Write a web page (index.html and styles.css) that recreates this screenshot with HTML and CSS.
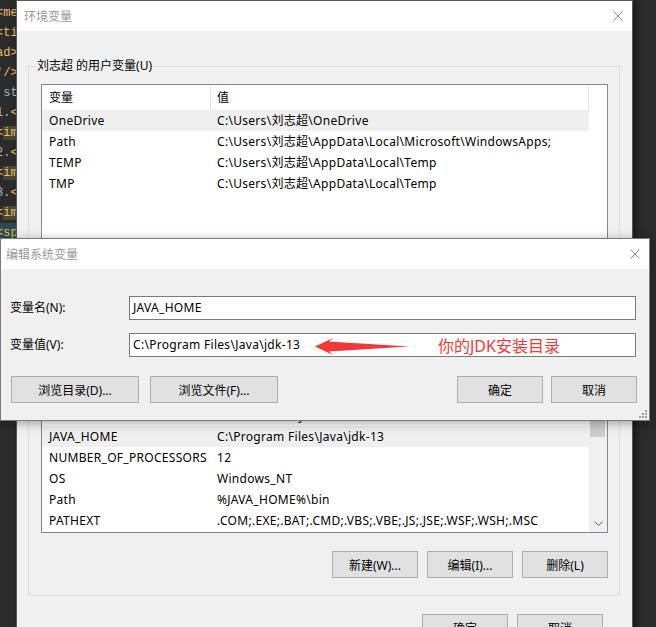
FILE: index.html
```html
<!DOCTYPE html>
<html lang="zh-CN">
<head>
<meta charset="utf-8">
<title>环境变量</title>
<link rel="stylesheet" href="styles.css">
</head>
<body>
<div class="desktop">
  <div class="editor">
    <div class="code"><span class="tag">&lt;me</span></div>
    <div class="code"><span class="tag">&lt;ti</span></div>
    <div class="code"><span class="tag">ad&gt;</span></div>
    <div class="code"><span class="tag">'/&gt;</span></div>
    <div class="code"><span class="txt"> st</span></div>
    <div class="code"><span class="txt">1.</span><span class="tag">&lt;</span></div>
    <div class="code"><span class="tag">&lt;</span><span class="tag hl">im</span></div>
    <div class="code"><span class="txt">2.</span><span class="tag">&lt;</span></div>
    <div class="code"><span class="tag">&lt;</span><span class="tag hl">im</span></div>
    <div class="code"><span class="txt">3.</span><span class="tag">&lt;</span></div>
    <div class="code"><span class="tag">&lt;</span><span class="tag hl">im</span></div>
    <div class="code sel"><span class="tag">&lt;sp</span></div>
  </div>

  <div class="window main">
    <div class="titlebar">
      <span class="title">环境变量</span>
      <svg class="close" viewBox="0 0 10 10"><path d="M0.5 0.5 L9.5 9.5 M9.5 0.5 L0.5 9.5"/></svg>
    </div>
    <div class="win-body">
      <div class="group user">
        <span class="group-label">刘志超 的用户变量(U)</span>
        <div class="listview lv-user">
          <div class="lv-main">
            <div class="lv-head"><div class="c1">变量</div><div class="c2">值</div></div>
            <div class="lv-row sel"><div class="c1">OneDrive</div><div class="c2">C:\Users\刘志超\OneDrive</div></div>
            <div class="lv-row"><div class="c1">Path</div><div class="c2">C:\Users\刘志超\AppData\Local\Microsoft\WindowsApps;</div></div>
            <div class="lv-row"><div class="c1">TEMP</div><div class="c2">C:\Users\刘志超\AppData\Local\Temp</div></div>
            <div class="lv-row"><div class="c1">TMP</div><div class="c2">C:\Users\刘志超\AppData\Local\Temp</div></div>
          </div>
        </div>
        <div class="btn-row">
          <button class="btn w86">新建(N)...</button>
          <button class="btn w86">编辑(E)...</button>
          <button class="btn w86">删除(D)</button>
        </div>
      </div>

      <div class="group system">
        <span class="group-label">系统变量(S)</span>
        <div class="listview lv-sys">
          <div class="lv-main">
            <div class="lv-head"><div class="c1">变量</div><div class="c2">值</div></div>
            <div class="lv-row"><div class="c1">ComSpec</div><div class="c2">C:\WINDOWS\system32\cmd.exe</div></div>
            <div class="lv-row"><div class="c1">CLASSPATH</div><div class="c2">.;%JAVA_HOME%\lib;%JAVA_HOME%\lib\tools.jar</div></div>
            <div class="lv-row"><div class="c1">DriverData</div><div class="c2">C:\Windows\System32\Drivers\DriverData</div></div>
            <div class="lv-row sel"><div class="c1">JAVA_HOME</div><div class="c2">C:\Program Files\Java\jdk-13</div></div>
            <div class="lv-row"><div class="c1">NUMBER_OF_PROCESSORS</div><div class="c2">12</div></div>
            <div class="lv-row"><div class="c1">OS</div><div class="c2">Windows_NT</div></div>
            <div class="lv-row"><div class="c1">Path</div><div class="c2">%JAVA_HOME%\bin</div></div>
            <div class="lv-row"><div class="c1">PATHEXT</div><div class="c2">.COM;.EXE;.BAT;.CMD;.VBS;.VBE;.JS;.JSE;.WSF;.WSH;.MSC</div></div>
          </div>
          <div class="vscroll">
            <div class="sb-arrow"><svg viewBox="0 0 9 5"><path d="M0.5 4.5 L4.5 0.5 L8.5 4.5"/></svg></div>
            <div class="sb-thumb"></div>
            <div class="sb-track"></div>
            <div class="sb-arrow"><svg viewBox="0 0 9 5"><path d="M0.5 0.5 L4.5 4.5 L8.5 0.5"/></svg></div>
          </div>
        </div>
        <div class="btn-row">
          <button class="btn w86">新建(W)...</button>
          <button class="btn w86">编辑(I)...</button>
          <button class="btn w86">删除(L)</button>
        </div>
      </div>

      <div class="btn-row footer">
        <button class="btn w86">确定</button>
        <button class="btn w86">取消</button>
      </div>
    </div>
  </div>

  <div class="window dialog">
    <div class="titlebar">
      <span class="title">编辑系统变量</span>
      <svg class="close" viewBox="0 0 10 10"><path d="M0.5 0.5 L9.5 9.5 M9.5 0.5 L0.5 9.5"/></svg>
    </div>
    <div class="dlg-body">
      <div class="field-grid">
        <div class="field-label">变量名(N):</div>
        <div class="input">JAVA_HOME</div>
        <div class="field-label">变量值(V):</div>
        <div class="input">C:\Program Files\Java\jdk-13</div>
      </div>
      <div class="dlg-buttons">
        <div class="btn-group left">
          <button class="btn w128">浏览目录(D)...</button>
          <button class="btn w128">浏览文件(F)...</button>
        </div>
        <div class="btn-group right">
          <button class="btn w86">确定</button>
          <button class="btn w86">取消</button>
        </div>
      </div>
    </div>
    <svg class="arrow" viewBox="0 0 96 21"><polygon points="1,10.5 19,2 15,5.5 95,10.5 15,15.5 19,19"/></svg>
    <span class="note">你的JDK安装目录</span>
    <svg class="grip" viewBox="0 0 8 8"><rect x="6" y="0" width="2" height="2"/><rect x="3" y="3" width="2" height="2"/><rect x="6" y="3" width="2" height="2"/><rect x="0" y="6" width="2" height="2"/><rect x="3" y="6" width="2" height="2"/><rect x="6" y="6" width="2" height="2"/></svg>
  </div>
</div>
</body>
</html>
```

FILE: styles.css
```css
* { box-sizing: border-box; }
html, body { margin: 0; padding: 0; }
body {
  width: 656px;
  height: 627px;
  overflow: hidden;
  background: #2b2b2b;
  font-family: "Noto Sans", "Noto Sans CJK SC", sans-serif;
  font-size: 12px;
  color: #000;
}
.desktop {
  position: relative;
  width: 656px;
  height: 627px;
  overflow: hidden;
  background: #2b2b2b;
}

/* code editor strip behind windows */
.editor {
  width: 16px;
  overflow: hidden;
  padding-top: 3px;
  font-family: "Liberation Mono", "DejaVu Sans Mono", monospace;
  font-size: 12px;
}
.code {
  height: 20px;
  line-height: 20px;
  white-space: pre;
  margin-left: -4px;
  color: #a9b7c6;
}
.tag { color: #e8bf6a; }
.hl { background: #4a4731; }
.code.sel { background: #2e4a4f; }

/* windows */
.window {
  position: absolute;
  background: #f0f0f0;
  border: 1px solid #5a5a5a;
}
.main {
  left: 16px;
  top: 0;
  width: 617px;
  height: 660px;
  box-shadow: 3px 0 6px rgba(0, 0, 0, 0.45);
}
.titlebar {
  height: 30px;
  background: #fff;
  display: flex;
  align-items: center;
  justify-content: space-between;
  padding: 0 9px 0 7px;
}
.title { color: #999; font-size: 12px; }
.close { width: 10px; height: 10px; display: block; }
.close path { stroke: #8a8a8a; stroke-width: 1; fill: none; }

.win-body { padding: 35px 12px 0 11px; }

.group {
  position: relative;
  border: 1px solid #dcdcdc;
  padding: 17px 11px 9px 12px;
}
.group.system {
  margin-top: 14px;
  padding-bottom: 17px;
}
.group-label {
  position: absolute;
  left: 7px;
  top: -9px;
  line-height: 16px;
  padding: 0 1px;
  background: #f0f0f0;
}

.listview {
  border: 1px solid #828790;
  background: #fff;
  display: flex;
  overflow: hidden;
}
.lv-user { height: 170px; }
.lv-sys { height: 196px; }
.lv-main { width: 547px; flex: none; }
.lv-head { display: flex; height: 25px; line-height: 25px; }
.lv-head .c1, .lv-head .c2 { border-right: 1px solid #e5e5e5; }
.lv-row {
  display: flex;
  height: 21px;
  line-height: 21px;
  letter-spacing: 0.3px;
}
.lv-row.sel { background: #efefef; }
.c1 {
  width: 169px;
  flex: none;
  padding-left: 7px;
  white-space: nowrap;
  overflow: hidden;
}
.c2 {
  width: 378px;
  flex: none;
  padding-left: 6px;
  white-space: nowrap;
  overflow: hidden;
}

.vscroll {
  width: 18px;
  flex: none;
  background: #f0f0f0;
  display: flex;
  flex-direction: column;
}
.sb-arrow {
  height: 17px;
  display: flex;
  align-items: center;
  justify-content: center;
}
.sb-arrow svg { width: 9px; height: 5px; display: block; }
.sb-arrow path { stroke: #606060; stroke-width: 1; fill: none; }
.sb-thumb {
  height: 77px;
  margin: 5px 2px 0 1px;
  background: #cdcdcd;
}
.sb-track { flex: 1; }

.btn-row {
  display: flex;
  justify-content: flex-end;
  gap: 9px;
  margin-top: 14px;
}
.group.system .btn-row { margin-top: 18px; }
.btn-row.footer {
  margin-top: 18px;
  padding-right: 17px;
}
.btn {
  height: 27px;
  padding: 0;
  margin: 0;
  border: 1px solid #adadad;
  background: #e1e1e1;
  font-family: inherit;
  font-size: 12px;
  color: #000;
  display: flex;
  align-items: center;
  justify-content: center;
}
.w86 { width: 86px; }
.w128 { width: 128px; }

/* dialog */
.dialog {
  left: 0;
  top: 238px;
  width: 650px;
  height: 183px;
  border-color: #7a7a7a;
  box-shadow: 0 2px 10px rgba(0, 0, 0, 0.35);
}
.dialog .titlebar { padding: 0 9px 0 5px; }
.dlg-body { padding: 27px 12px 0 9px; }
.field-grid {
  display: grid;
  grid-template-columns: 119px 507px;
  row-gap: 13px;
}
.field-label { line-height: 24px; }
.input {
  height: 24px;
  border: 1px solid #7a7a7a;
  background: #fff;
  padding-left: 3px;
  line-height: 22px;
  white-space: nowrap;
  letter-spacing: 0.3px;
}
.dlg-buttons {
  display: flex;
  margin-top: 19px;
}
.btn-group { display: flex; }
.btn-group.left { gap: 11px; margin-left: 1px; }
.btn-group.right { gap: 8px; margin-left: auto; }

.arrow {
  position: absolute;
  left: 313px;
  top: 97px;
  width: 96px;
  height: 21px;
}
.arrow polygon { fill: #f03a3a; }
.note {
  position: absolute;
  left: 437px;
  top: 97px;
  line-height: 20px;
  font-size: 16px;
  color: #f03a3a;
  white-space: nowrap;
}
.grip {
  position: absolute;
  right: 2px;
  bottom: 2px;
  width: 8px;
  height: 8px;
}
.grip rect { fill: #a0a0a0; }
```
